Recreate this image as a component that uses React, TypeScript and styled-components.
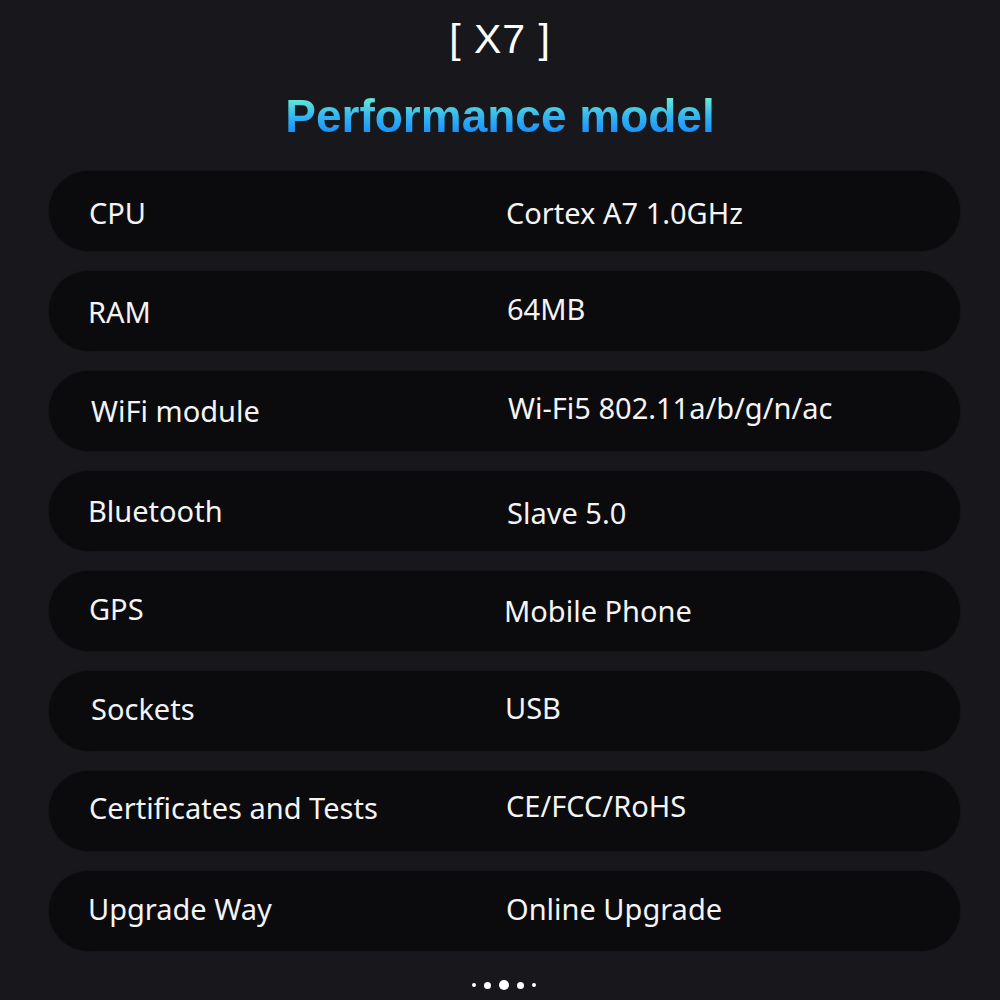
import React from "react";
import styled, { createGlobalStyle } from "styled-components";

const GlobalStyle = createGlobalStyle`
  html, body {
    margin: 0;
    padding: 0;
    background: #18181c;
  }
`;

const Page = styled.div`
  width: 1000px;
  height: 1000px;
  box-sizing: border-box;
  background: #18181c;
  display: flex;
  flex-direction: column;
  align-items: center;
  padding-top: 14px;
  overflow: hidden;
`;

const ModelTag = styled.h1`
  margin: 0;
  font-family: "Liberation Sans", Arial, sans-serif;
  font-weight: 400;
  font-size: 41px;
  line-height: 50px;
  color: #ffffff;
  letter-spacing: 1px;
`;

const Heading = styled.h2`
  margin: 25px 0 0;
  font-family: "Liberation Sans", Arial, sans-serif;
  font-weight: 700;
  font-size: 46px;
  line-height: 54px;
  background: linear-gradient(180deg, #6aeed2 15%, #34b6f0 50%, #168cff 85%);
  -webkit-background-clip: text;
  background-clip: text;
  color: transparent;
`;

const SpecList = styled.div`
  margin-top: 28px;
  width: 911px;
  margin-left: 9px;
  display: flex;
  flex-direction: column;
  gap: 20px;
`;

const SpecRow = styled.div`
  height: 80px;
  border-radius: 40px;
  background: #0b0b0e;
  box-shadow: 0 0 2px rgba(0, 0, 0, 0.6);
  display: grid;
  grid-template-columns: 417px 1fr;
  align-items: center;
  font-family: "Noto Sans", "Open Sans", sans-serif;
  font-size: 29px;
  color: #f4f4f4;
`;

const Cell = styled.span<{ $dx: number; $dy: number }>`
  padding-left: ${(p) => p.$dx}px;
  transform: translateY(${(p) => p.$dy - 1.5}px);
  white-space: nowrap;
`;

const Pager = styled.div`
  margin-top: 29px;
  margin-left: 8px;
  display: flex;
  align-items: center;
  gap: 8px;
`;

const Dot = styled.span<{ $size: number }>`
  width: ${(p) => p.$size}px;
  height: ${(p) => p.$size}px;
  border-radius: 50%;
  background: #ffffff;
`;

const specs = [
  { label: "CPU", value: "Cortex A7 1.0GHz", lx: 40, ly: 2, vx: 40, vy: 2 },
  { label: "RAM", value: "64MB", lx: 39, ly: 1, vx: 41, vy: -2 },
  { label: "WiFi module", value: "Wi-Fi5 802.11a/b/g/n/ac", lx: 42, ly: 0, vx: 42, vy: -3 },
  { label: "Bluetooth", value: "Slave 5.0", lx: 39, ly: 0, vx: 41, vy: 2 },
  { label: "GPS", value: "Mobile Phone", lx: 40, ly: -2, vx: 38, vy: 0 },
  { label: "Sockets", value: "USB", lx: 42, ly: -2, vx: 39, vy: -3 },
  { label: "Certificates and Tests", value: "CE/FCC/RoHS", lx: 40, ly: -3, vx: 40, vy: -5 },
  { label: "Upgrade Way", value: "Online Upgrade", lx: 39, ly: -2, vx: 40, vy: -2 },
];

const dots = [4, 7, 10, 7, 4];

export default function App() {
  return (
    <>
      <GlobalStyle />
      <Page>
        <ModelTag>[ X7 ]</ModelTag>
        <Heading>Performance model</Heading>
        <SpecList>
          {specs.map((s) => (
            <SpecRow key={s.label}>
              <Cell $dx={s.lx} $dy={s.ly}>{s.label}</Cell>
              <Cell $dx={s.vx} $dy={s.vy}>{s.value}</Cell>
            </SpecRow>
          ))}
        </SpecList>
        <Pager>
          {dots.map((d, i) => (
            <Dot key={i} $size={d} />
          ))}
        </Pager>
      </Page>
    </>
  );
}
